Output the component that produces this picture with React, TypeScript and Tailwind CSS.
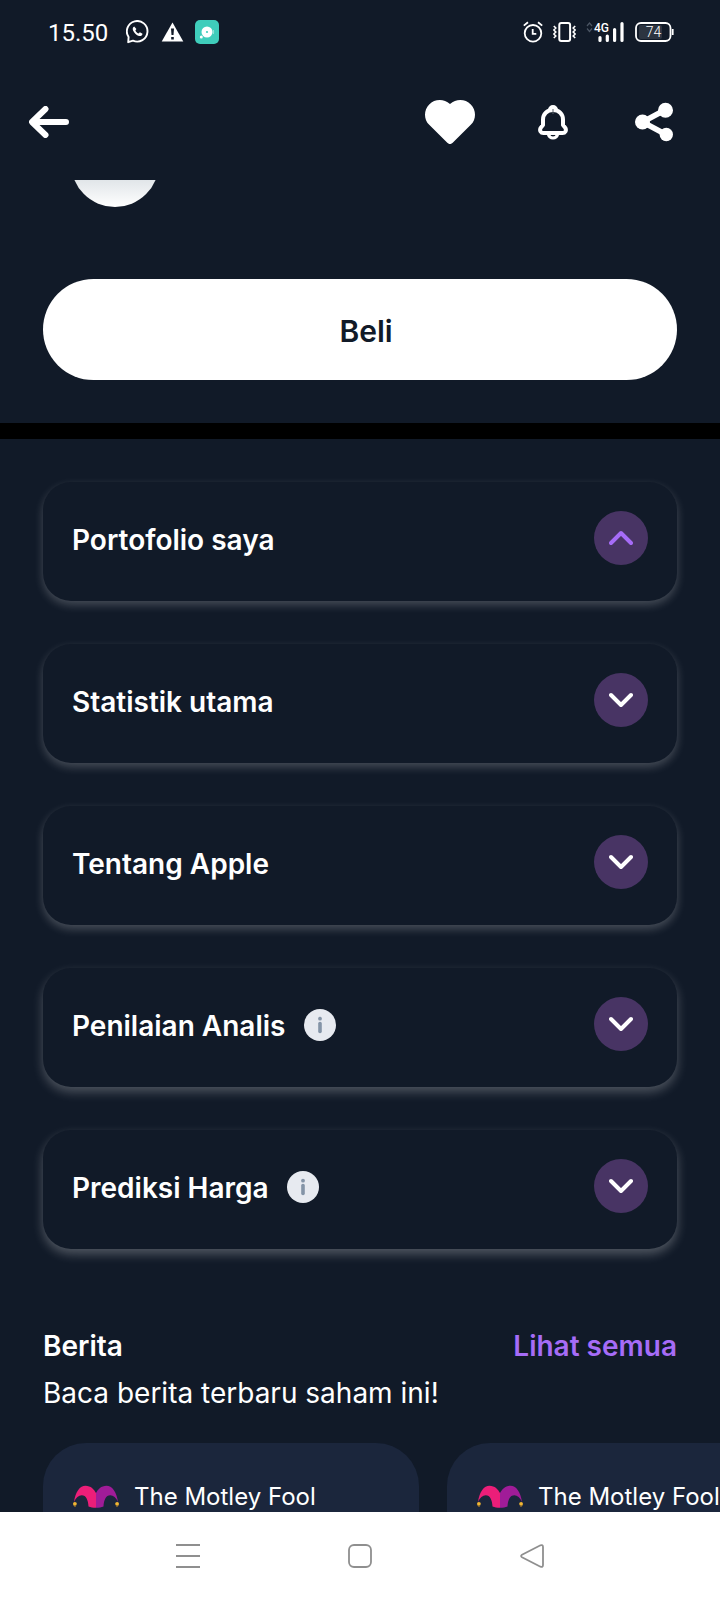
import { useState } from "react";
import clsx from "clsx";

const sections = [
  { id: "portfolio", title: "Portofolio saya", info: false, glow: "shadow-[0_4px_10px_rgba(255,255,255,0.22)]" },
  { id: "stats", title: "Statistik utama", info: false, glow: "shadow-[0_4px_10px_rgba(255,255,255,0.22)]" },
  { id: "about", title: "Tentang Apple", info: false, glow: "shadow-[0_4px_10px_rgba(255,255,255,0.23)]" },
  { id: "analyst", title: "Penilaian Analis", info: true, glow: "shadow-[0_5px_11px_rgba(255,255,255,0.25)]" },
  { id: "prediction", title: "Prediksi Harga", info: true, glow: "shadow-[0_5px_11px_rgba(255,255,255,0.27)]" },
];

const news = [
  { id: 1, source: "The Motley Fool" },
  { id: 2, source: "The Motley Fool" },
];

function StatusBar() {
  return (
    <div className="flex h-16 items-center justify-between pl-12 pr-[46px]">
      <div className="flex items-center">
        <span className="w-[78px] pt-px font-['Roboto',sans-serif] text-2xl">15.50</span>
        <svg width="23" height="24" viewBox="0 0 23 24" fill="none" stroke="currentColor" strokeWidth="1.9">
          <path d="M2.2 22.2 2.6 17A10.3 10.3 0 1 1 7 20.7Z" strokeLinejoin="round" />
          <path d="M8.2 6.6c-1.6.8-1.8 2.7-1 4.2 1.3 2.7 3.1 4.4 5.8 5.2 1.7.4 3.4-.5 3.5-2.2l-2.6-1.5-1.4 1.200c-1.5-.7-2.5-1.7-3.1-3l1-1.4Z" fill="currentColor" stroke="none" />
        </svg>
        <svg className="ml-3" width="23" height="20" viewBox="0 0 23 20">
          <path d="M11.5.5 22.3 19.5H.7Z" fill="currentColor" />
          <path d="M10 6.5h3l-.5 6.5h-2ZM10.2 15h2.6v2.5h-2.6Z" fill="#111a28" />
        </svg>
        <svg className="ml-[11px]" width="24" height="24" viewBox="0 0 24 24">
          <rect width="24" height="24" rx="5" fill="#3fcdbb" />
          <circle cx="12" cy="12" r="5.5" fill="#fff" />
          <circle cx="12" cy="12" r="1.1" fill="#3fcdbb" />
          <circle cx="6.3" cy="17" r="1.5" fill="#fff" />
          <path d="M18.5 10v4M17.8 12h1.4" stroke="#8fe2d8" />
        </svg>
      </div>
      <div className="flex items-center gap-[10px]">
        <svg width="20" height="22" viewBox="0 0 20 22" fill="none" stroke="currentColor" strokeWidth="1.8">
          <circle cx="10" cy="12.3" r="8.3" />
          <path d="M9.7 8v4.8h3.6M.8 4.600 5 1.200M19.2 4.600 15 1.200" />
        </svg>
        <svg width="23" height="20" viewBox="0 0 23 20" fill="none" stroke="currentColor">
          <rect x="6.3" y="1" width="10.8" height="18" rx="2" strokeWidth="2" />
          <path d="m.8 4 2 2-2 2 2 2-2 2 2 2-2 2M22.2 4l-2 2 2 2-2 2 2 2-2 2 2 2" strokeWidth="1.6" />
        </svg>
        <svg width="39" height="22" viewBox="0 0 39 22">
          <path d="m1 5 2.5-3L6 5M1 7.5l2.5 3 2.5-3" fill="none" stroke="#4b5563" strokeWidth="1.2" />
          <path d="M14 16.500v3M21.300 15v4.500M28.600 8.500v11M36 2.500v17" stroke="currentColor" strokeWidth="3.200" strokeLinecap="round" />
          <text x="8" y="11" fontFamily="Roboto, sans-serif" fontSize="12" fontWeight="500" fill="currentColor">4G</text>
        </svg>
        <svg width="39" height="20" viewBox="0 0 39 20">
          <rect x="4" y="3" width="23" height="14" rx="2" fill="#2c3440" />
          <rect x="1" y="1" width="34.5" height="18" rx="5" fill="none" stroke="currentColor" strokeWidth="1.8" />
          <path d="M37.7 7v6" stroke="currentColor" strokeWidth="1.8" />
          <text x="18.500" y="15" textAnchor="middle" fontFamily="Roboto, sans-serif" fontSize="14" fontWeight="300" fill="currentColor">74</text>
        </svg>
      </div>
    </div>
  );
}

function TopBar() {
  const iconButton = "flex size-[50px] items-center justify-center";

  return (
    <div className="flex h-[116px] items-center justify-between pl-[29px] pr-[41px]">
      <button type="button" aria-label="Kembali">
        <svg width="40" height="32" viewBox="0 0 40 32" fill="none" stroke="currentColor" strokeWidth="6" strokeLinecap="round" strokeLinejoin="round">
          <path d="M16.5 3 3 16l13.5 13M4 16h33" />
        </svg>
      </button>
      <div className="flex items-center gap-[52px]">
        <button type="button" aria-label="Favorit" className={iconButton}>
          <svg width="50" height="44" viewBox="0 0 50 44" fill="currentColor">
            <path d="M25 4C18.5-1.7 9.5-.8 4.2 4.4c-5.6 5.7-5.6 14.8 0 20.4L22.3 42.7a3.8 3.8 0 0 0 5.4 0L45.8 24.8c5.6-5.6 5.6-14.7 0-20.4C40.5-.8 31.5-1.7 25 4Z" />
          </svg>
        </button>
        <button type="button" aria-label="Notifikasi" className={iconButton}>
          <svg width="32" height="36" viewBox="0 0 32 36" fill="none" stroke="currentColor" strokeWidth="4" strokeLinejoin="round">
            <path d="M17 6c-6 0-10 4-10 9.500v5.500l-2.400 3c-1.300 2.600.2 5 2.800 5h19.200c2.600 0 4.100-2.400 2.800-5L27 21v-5.500C27 10 23 6 17 6Z" />
            <path d="M13 6a4 4 0 0 1 8 0" fill="currentColor" strokeWidth="2" />
            <path d="M17 5v5" stroke="#5a626d" strokeWidth="1" />
            <path d="M12.200 30c.8 2.700 2.500 4 4.800 4s4-1.300 4.800-4" strokeWidth="3" />
          </svg>
        </button>
        <button type="button" aria-label="Bagikan" className={iconButton}>
          <svg width="38" height="40" viewBox="0 0 38 40" fill="currentColor">
            <path d="M30 8 7.5 20 31 32.5" fill="none" stroke="currentColor" strokeWidth="5.5" />
            <circle cx="7.5" cy="20" r="7.5" />
            <circle cx="30.5" cy="8.3" r="7.500" />
            <circle cx="31.3" cy="32.5" r="6.700" />
          </svg>
        </button>
      </div>
    </div>
  );
}

function InfoIcon() {
  return (
    <svg width="32" height="32" viewBox="0 0 32 32">
      <circle cx="16" cy="16" r="16" fill="#e7eaf0" />
      <circle cx="16" cy="9.7" r="1.9" fill="#8494a7" />
      <path d="M16 14.5v8" stroke="#8494a7" strokeWidth="3.6" strokeLinecap="round" />
    </svg>
  );
}

function JesterHat() {
  return (
    <svg width="46" height="24" viewBox="0 0 46 24">
      <path d="M1 17C2.500 6.500 7 .8 12.500.8 18 .8 21 4.500 23 8v14.800c-3 0-5.500-.3-7.500-1.200C15.300 15 13 10.200 8.800 10.200 5.500 10.200 3 12.500 1 17Z" fill="#ec1e79" />
      <path d="M45 17C43.500 6.500 39 .8 33.500.8 28 .8 25 4.500 23 8v14.800c3 0 5.500-.3 7.500-1.200C30.700 15 33 10.200 37.200 10.200c3.300 0 5.800 2.300 7.800 6.800Z" fill="#a01c98" />
      <circle cx="1.9" cy="18.8" r="1.9" fill="#f2b632" />
      <circle cx="44.1" cy="18.8" r="1.9" fill="#f2b632" />
      <path d="M1 20.5 2.5 22M45 20.5 43.5 22" stroke="#c98a1e" />
    </svg>
  );
}

export default function App() {
  const [open, setOpen] = useState<string | null>("portfolio");

  return (
    <div className="flex h-screen flex-col bg-[#111a28] font-['Inter',sans-serif] text-white">
      <header className="shrink-0">
        <StatusBar />
        <TopBar />
      </header>

      <main className="min-h-0 flex-1 overflow-y-auto [scrollbar-width:none]">
        <section className="border-b-16 border-black px-[43px] pb-[43px]">
          {/* Logo is scrolled partly under the header */}
          <div className="-mt-[61px] ml-7 size-22 rounded-full bg-linear-to-b from-[#dde2e6] from-65% to-white" />
          <button type="button" className="mt-18 h-[101px] w-full rounded-full bg-white pt-1 pl-3 text-[30px] font-semibold text-[#111a28]">
            Beli
          </button>
        </section>

        <section className="flex flex-col gap-[43px] px-[43px] pt-[43px]">
          {sections.map((section) => {
            const isOpen = open === section.id;
            return (
              <div key={section.id} className={clsx("flex h-[119px] items-start rounded-[28px] bg-[#111a28] px-[29px] pt-[29px]", section.glow)}>
                <h2 className="text-[28px] leading-[58px] font-semibold">{section.title}</h2>
                {section.info && (
                  <button type="button" aria-label={`Info ${section.title}`} className="mt-3 ml-[18px]">
                    <InfoIcon />
                  </button>
                )}
                <button
                  type="button"
                  aria-label={section.title}
                  aria-expanded={isOpen}
                  onClick={() => setOpen(isOpen ? null : section.id)}
                  className={clsx("ml-auto flex size-[54px] items-center justify-center rounded-full bg-[#483464]", isOpen ? "text-[#a66cf7]" : "text-white")}
                >
                  <svg width="24" height="16" viewBox="0 0 24 16" fill="none" stroke="currentColor" strokeWidth="4" strokeLinecap="round" strokeLinejoin="round">
                    <path d={isOpen ? "M2 13 12 3l10 10" : "M2 3l10 10L22 3"} />
                  </svg>
                </button>
              </div>
            );
          })}
        </section>

        <section className="pt-[77px]">
          <div className="flex items-center justify-between px-[43px]">
            <h2 className="text-[28px] leading-10 font-semibold">Berita</h2>
            <a href="#berita" className="text-[28px] leading-10 font-semibold text-[#a66cf7]">Lihat semua</a>
          </div>
          <p className="mt-[7px] px-[43px] text-[28px] leading-10">Baca berita terbaru saham ini!</p>
          <div className="mt-[30px] flex gap-7 overflow-x-auto pl-[43px] [scrollbar-width:none]">
            {news.map((item) => (
              <article key={item.id} className="flex h-[280px] w-[376px] shrink-0 items-start gap-[15px] rounded-[43px] bg-[#1b263c] px-[30px] pt-[38px]">
                <div className="pt-1">
                  <JesterHat />
                </div>
                <h3 className="text-2xl">{item.source}</h3>
              </article>
            ))}
          </div>
        </section>
      </main>

      <nav className="flex h-22 shrink-0 items-center justify-center gap-[148px] bg-white text-[#8f8f8f]">
        <button type="button" aria-label="Aplikasi terbaru">
          <svg width="24" height="24" viewBox="0 0 24 24" stroke="currentColor" strokeWidth="2">
            <path d="M0 1h24M0 12h24M0 23h24" />
          </svg>
        </button>
        <button type="button" aria-label="Beranda">
          <svg width="24" height="24" viewBox="0 0 24 24" fill="none" stroke="currentColor" strokeWidth="1.8">
            <rect x="1" y="1" width="22" height="22" rx="5" />
          </svg>
        </button>
        <button type="button" aria-label="Sebelumnya">
          <svg width="24" height="24" viewBox="0 0 24 24" fill="none" stroke="currentColor" strokeWidth="1.8" strokeLinejoin="round">
            <path d="M2 10.8 20.5 1.300q2.5-.8 2.5 1.700v18q0 2.500-2.500 1.700L2 13.200q-1.800-1.200 0-2.400Z" />
          </svg>
        </button>
      </nav>
    </div>
  );
}
